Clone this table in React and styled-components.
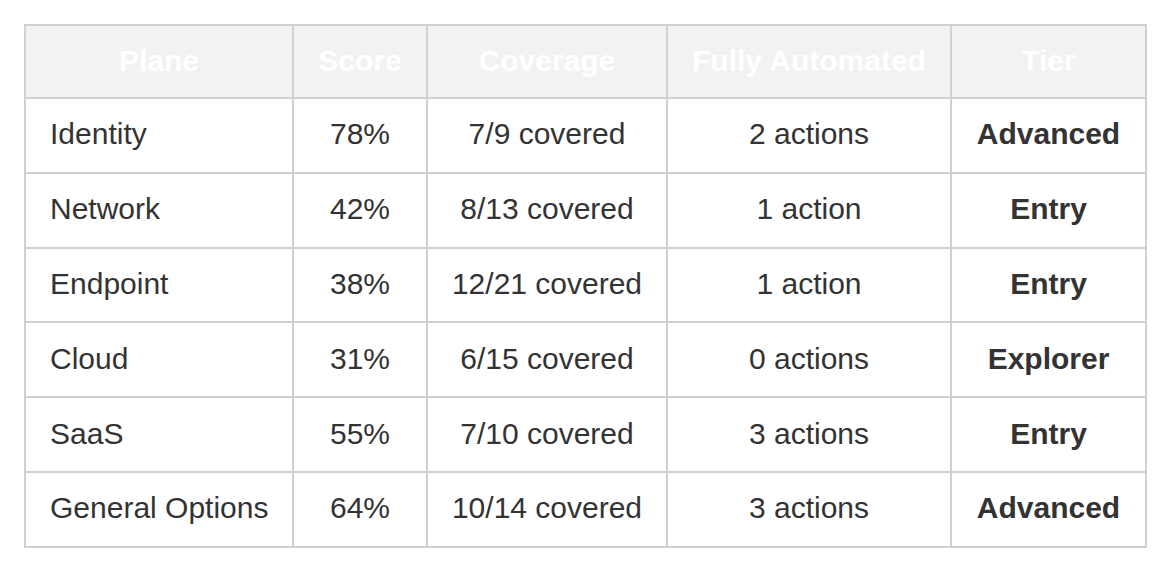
import styled, { createGlobalStyle } from "styled-components";

const GlobalStyle = createGlobalStyle`
  body {
    margin: 0;
    background: #ffffff;
    font-family: "Liberation Sans", Arial, sans-serif;
  }
`;

const rows = [
  { plane: "Identity", score: "78%", coverage: "7/9 covered", auto: "2 actions", tier: "Advanced" },
  { plane: "Network", score: "42%", coverage: "8/13 covered", auto: "1 action", tier: "Entry" },
  { plane: "Endpoint", score: "38%", coverage: "12/21 covered", auto: "1 action", tier: "Entry" },
  { plane: "Cloud", score: "31%", coverage: "6/15 covered", auto: "0 actions", tier: "Explorer" },
  { plane: "SaaS", score: "55%", coverage: "7/10 covered", auto: "3 actions", tier: "Entry" },
  { plane: "General Options", score: "64%", coverage: "10/14 covered", auto: "3 actions", tier: "Advanced" },
];

const Page = styled.div`
  padding: 24px;
`;

const Table = styled.table`
  width: 1121px;
  border-collapse: collapse;
  table-layout: fixed;
  font-size: 30px;
  color: #333333;
`;

const HeadCell = styled.th`
  height: 69px;
  padding: 0 0 2px;
  background: #f2f2f2;
  color: #ffffff;
  font-weight: bold;
  text-align: center;
  border: 2px solid #d0d0d0;
`;

const Cell = styled.td`
  height: 70.8px;
  padding: 0 ${(p) => (p.$left ? "24px" : "0")} 2px;
  text-align: ${(p) => (p.$left ? "left" : "center")};
  font-weight: ${(p) => (p.$bold ? "bold" : "normal")};
  border: 2px solid #d0d0d0;
  white-space: nowrap;
`;

export default function App() {
  return (
    <Page>
      <GlobalStyle />
      <Table>
        <colgroup>
          <col style={{ width: 268 }} />
          <col style={{ width: 134 }} />
          <col style={{ width: 240 }} />
          <col style={{ width: 284 }} />
          <col style={{ width: 195 }} />
        </colgroup>
        <thead>
          <tr>
            <HeadCell>Plane</HeadCell>
            <HeadCell>Score</HeadCell>
            <HeadCell>Coverage</HeadCell>
            <HeadCell>Fully Automated</HeadCell>
            <HeadCell>Tier</HeadCell>
          </tr>
        </thead>
        <tbody>
          {rows.map((r) => (
            <tr key={r.plane}>
              <Cell $left>{r.plane}</Cell>
              <Cell>{r.score}</Cell>
              <Cell>{r.coverage}</Cell>
              <Cell>{r.auto}</Cell>
              <Cell $bold>{r.tier}</Cell>
            </tr>
          ))}
        </tbody>
      </Table>
    </Page>
  );
}
